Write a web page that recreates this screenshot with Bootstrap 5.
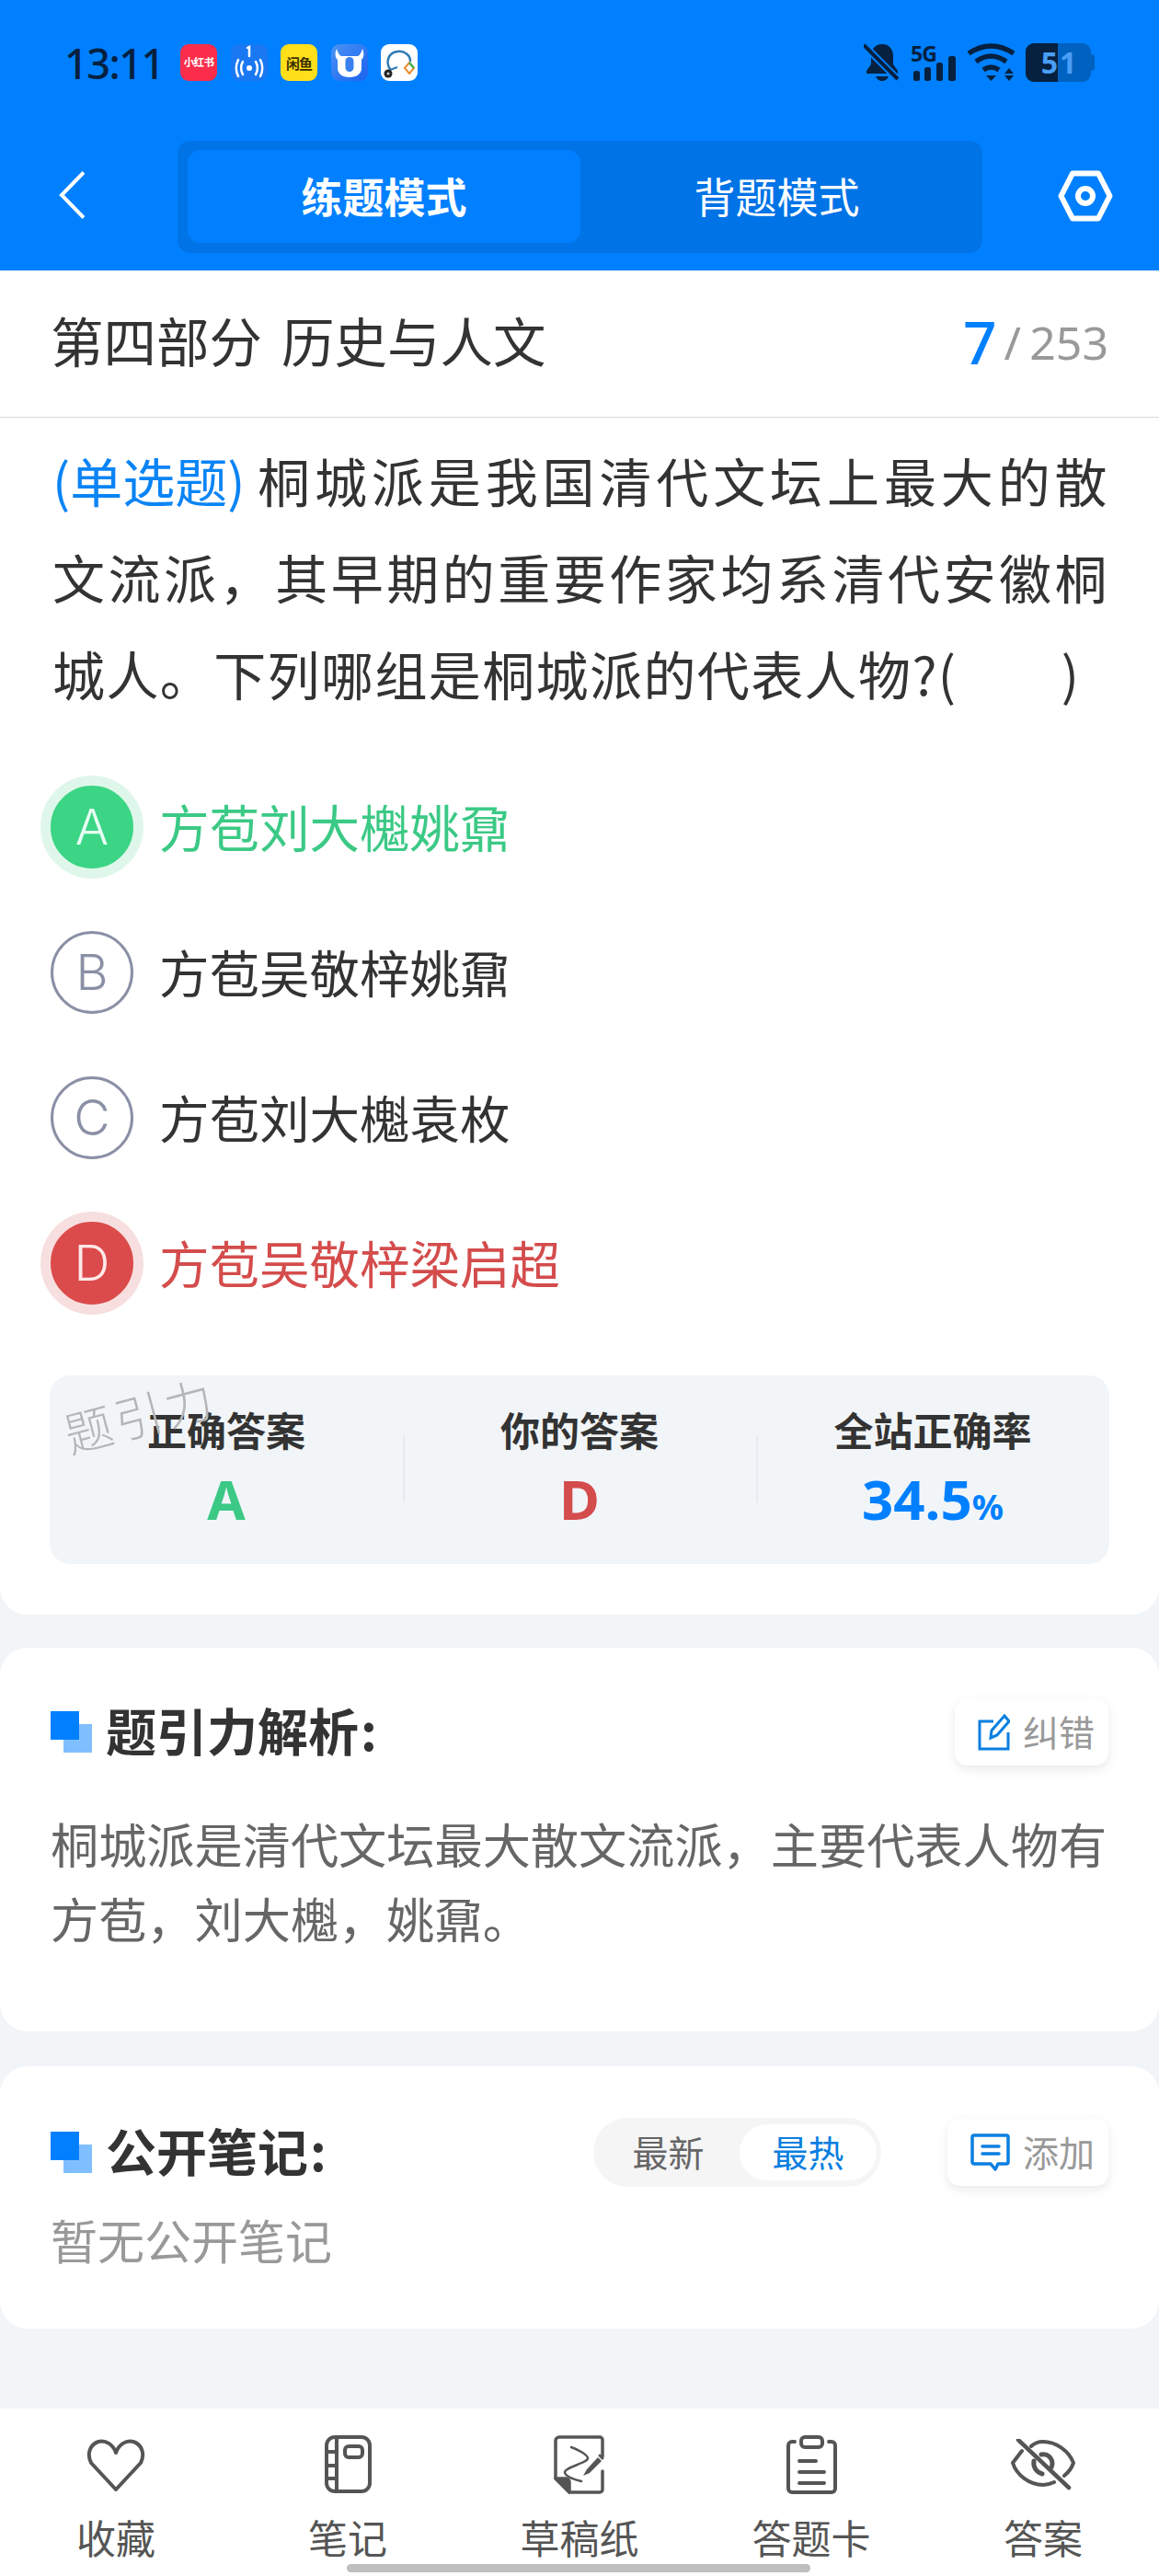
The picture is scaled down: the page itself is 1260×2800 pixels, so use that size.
<!DOCTYPE html>
<html lang="zh-CN">
<head>
<meta charset="utf-8">
<title>练题模式</title>
<link href="https://cdn.jsdelivr.net/npm/bootstrap@5.3.0/dist/css/bootstrap.min.css" rel="stylesheet">
<style>
html,body{margin:0;padding:0}
body{width:1260px;height:2800px;overflow:hidden;background:#f1f5f8;color:#333;font-family:"Noto Sans CJK SC","Noto Sans",sans-serif}
.shell{height:2800px}
.hdr{background:#0080ff;height:294px}
.statusrow{height:136px;padding-left:70px;padding-right:70px}
.clock{font-family:"Noto Sans","Noto Sans CJK SC",sans-serif;font-size:45px;font-weight:500;color:#06203f;line-height:1;width:102px;margin-right:24px;letter-spacing:-1.500px;white-space:nowrap}
.appicons{gap:14.5px}
.appico{width:40px;height:40px;border-radius:9px;font-weight:700;line-height:1;overflow:hidden;white-space:nowrap}
.appred{background:#fb2d4b;color:#fff;font-size:11.5px;letter-spacing:-.6px}
.appyellow{background:#ffde1a;color:#3b2f00;font-size:15px;letter-spacing:-1px}
.appblue{background:#1a78f2}
.appgrad{background:linear-gradient(135deg,#4a93f5,#1a62ee)}
.appwhite{background:#fff}
.sysicons{gap:11px}
.fiveg{font-size:23px;font-weight:700;color:#06203f;line-height:1;font-family:"Noto Sans",sans-serif;letter-spacing:-1px}
.sigwrap{width:50px;height:43px}
.batt{width:71px;height:42px;border-radius:9px;background:#0062c0;font-family:"Noto Sans",sans-serif;font-weight:700;font-size:32px;line-height:42px;color:#4a9ef5}
.battfill{width:35px;height:42px;background:#06203f;text-align:right;border-radius:9px 0 0 9px}
.battrest{padding-left:2px}
.batttip{width:4px;height:18px;background:#0062c0;border-radius:0 3px 3px 0}
.navrow{height:158px;padding-left:64px}
.chev{margin-top:-6px}
.hexi{margin-top:-4px}
.tabbar{width:875px;height:122px;margin-left:101px;margin-right:82px;background:#0073e6;border-radius:14px;padding:10px 10px 11px 11px;margin-top:-2px}
.tabitem{flex:1 1 0;border-radius:14px;color:#fff;font-size:45px;line-height:1;padding-bottom:3px}
.tabon{background:#0080ff;font-weight:700}
.sheet{background:#fff;border-radius:0 0 30px 30px;height:1461px}
.titlebar{height:160px;border-bottom:1px solid #d9d9d9;padding:0 55px 0 55px}
.secname{font-size:57.5px;color:#333;line-height:1;word-spacing:8px;padding-bottom:8px}
.counter{font-family:"Noto Sans",sans-serif;color:#999;font-size:50px;line-height:1;padding-bottom:4px}
.counter b{font-weight:500;color:#0080ff;font-size:64px}
.slashmark{margin:0 9px 0 8px}
.qtext{margin:15px 55px 0 57px;font-size:57px;letter-spacing:1.4px;line-height:105px;text-align:justify;color:#333}
.qtype{color:#0a84f5;letter-spacing:0;display:inline-block;margin-right:10px}
.opts{margin-top:36px;padding-left:55px}
.optrow{height:158px}
.optdot{width:90px;height:90px;border:3px solid #8a90a5;color:#8a90a5;font-family:Inter,sans-serif;font-weight:300;font-size:54px;line-height:1;margin-right:28px}
.optok{background:#3bd585;border-color:#3bd585;color:#e6fff2;box-shadow:0 0 0 11px #dff7ea}
.optbad{background:#dc4b4b;border-color:#dc4b4b;color:#ffe9e9;box-shadow:0 0 0 11px #f8dfdf}
.opttext{font-size:54.5px;line-height:1;color:#333;padding-bottom:2px}
.optgreen{color:#3bc985}
.optred{color:#d44c4c}
.statbox{margin:43px 54px 0;height:205px;background:#f1f5f8;border-radius:22px;padding-top:34px}
.statcol{flex:1 1 0}
.statcol+.statcol::before{content:"";position:absolute;left:0;top:31px;height:73px;width:2px;background:#e7ebef}
.statlabel{font-size:43px;font-weight:700;line-height:48px;color:#333}
.statval{font-family:"Noto Sans",sans-serif;font-size:60px;font-weight:700;line-height:56px;margin-top:24px}
.statval small{font-size:38px;font-weight:700}
.valblue{color:#0080ff}
.wm{left:14px;top:16px;font-size:52px;letter-spacing:4px;color:#b5b5b5;transform:rotate(-15deg);line-height:1;font-weight:300}
.panel{background:#fff;border:0;border-radius:30px}
.panelA{margin-top:36px;height:417px;padding:55px 55px 0}
.panelB{margin-top:38px;height:285px;padding:56px 55px 0}
.mark{width:31px;height:31px;background:#0080ff;box-shadow:14px 14px 0 #80bfff;margin:0 29px 14px 0}
.phead{font-size:55px;font-weight:700;line-height:1;color:#333;padding-bottom:7px}
.colonmark{margin-left:2px}
.tool{height:73px;border-radius:14px;background:#fff;box-shadow:0 4px 12px rgba(0,0,0,.09);padding:0 15px 0 25px;font-size:39px;color:#999;line-height:1;gap:14px;border:0}
.tool span{padding-bottom:2px}
.anatext{margin-top:44px;font-size:52.2px;line-height:81px;color:#666}
.seg{width:313px;height:75px;border-radius:38px;background:#f5f5f5;padding:7px 5px 7px 0;font-size:39px;line-height:1;color:#666;margin-right:72px}
.segoff{width:159px;padding-left:4px;padding-bottom:2px}
.segon{width:149px;height:61px;border-radius:31px;background:#fff;color:#0a7fe0;padding-bottom:2px}
.empty{margin-top:22px;font-size:51px;line-height:70px;color:#999}
.tabbarb{height:182px;background:#fff}
.bcol{flex:1 1 0;padding-top:29px}
.bico{height:63px}
.blabel{margin-top:22px;font-size:43px;line-height:50px;color:#555}
.homebar{left:377px;top:2787px;width:504px;height:9px;border-radius:5px;background:#bfbfbf}
svg{display:block}
</style>
</head>
<body>
<div class="shell d-flex flex-column position-relative">
  <header class="hdr">
    <div class="statusrow d-flex align-items-center">
      <div class="clock">13:11</div>
      <div class="appicons d-flex">
        <div class="appico appred d-flex align-items-center justify-content-center">小红书</div>
        <div class="appico appblue">
          <svg width="40" height="40" viewBox="0 0 40 40" fill="none" stroke="#fff" stroke-width="2" stroke-linecap="round"><path d="M18 4l2-1v10" stroke-width="2.500"/><circle cx="20" cy="26" r="3" fill="#fff" stroke="none"/><path d="M13 19c-2.500 4-2.500 10 0 14M27 19c2.500 4 2.500 10 0 14M8 17c-3 6-3 12 0 18M32 17c3 6 3 12 0 18" stroke-width="2.500"/></svg>
        </div>
        <div class="appico appyellow d-flex align-items-center justify-content-center">闲鱼</div>
        <div class="appico appgrad">
          <svg width="40" height="40" viewBox="0 0 40 40"><path d="M6 5c1 4 3 7 5 8h18c2-1 4-4 5-8 2 4 2 9-1 12v9c0 6-5 10-13 10S7 32 7 26v-9C4 14 4 9 6 5z" fill="#fff"/><rect x="15.500" y="14" width="9" height="16" rx="4.500" fill="#3a80f0"/></svg>
        </div>
        <div class="appico appwhite">
          <svg width="40" height="40" viewBox="0 0 40 40" fill="none"><path d="M10 27C5 20 8 9 18 8c8-1 14 4 14 10" stroke="#2e7bb5" stroke-width="2.500" stroke-linecap="round"/><path d="M10 28l8-3" stroke="#2e7bb5" stroke-width="2"/><circle cx="8" cy="32" r="4.500" fill="#222"/><circle cx="8" cy="32" r="1.500" fill="#ccc"/><path d="M31 20l5 6-5 6-5-6z" stroke="#f08a2c" stroke-width="2"/><path d="M31 20l5 6" stroke="#43b35a" stroke-width="2.500"/></svg>
        </div>
      </div>
      <div class="sysicons d-flex align-items-center ms-auto">
        <svg width="40" height="44" viewBox="0 0 40 44" fill="#06203f"><path d="M20 2c-8 0-12 6-12 13v9l-5 7v3h34v-3l-5-7v-9c0-7-4-13-12-13z"/><path d="M13 37h14c-1 3-4 5-7 5s-6-2-7-5z"/><path d="M2 5l34 34" stroke="#0080ff" stroke-width="8"/><path d="M0 3l37 37" stroke="#06203f" stroke-width="4"/></svg>
        <div class="sigwrap position-relative">
          <span class="fiveg position-absolute top-0 start-0">5G</span>
          <svg width="50" height="43" viewBox="0 0 50 43" fill="#06203f"><rect x="3" y="30" width="7" height="11" rx="2.500"/><rect x="15" y="26" width="7" height="15" rx="2.500"/><rect x="28" y="21" width="7" height="20" rx="2.500"/><rect x="41" y="14" width="8" height="27" rx="2.500"/></svg>
        </div>
        <svg width="53" height="43" viewBox="0 0 53 43" fill="none" stroke="#06203f" stroke-width="5.500"><path d="M2 11Q26.500 -5 51 11"/><path d="M10 20Q26 8 43 20"/><path d="M18 29Q26.500 23 35 29"/><path d="M21 35h11l-5.500 6z" fill="#06203f" stroke="none"/><path d="M41 33h10l-5-6zM41 35h10l-5 6z" fill="#06203f" stroke="none"/></svg>
        <div class="d-flex align-items-center">
          <div class="batt d-flex">
            <div class="battfill">5</div>
            <div class="battrest">1</div>
          </div>
          <div class="batttip"></div>
        </div>
      </div>
    </div>
    <div class="navrow d-flex align-items-center">
      <svg class="chev" width="28" height="52" viewBox="0 0 28 52" fill="none" stroke="#fff" stroke-width="4"><path d="M27 1.500L3 26l24 24.500"/></svg>
      <div class="tabbar d-flex">
        <div class="tabitem tabon d-flex align-items-center justify-content-center">练题模式</div>
        <div class="tabitem d-flex align-items-center justify-content-center">背题模式</div>
      </div>
      <svg class="hexi" width="60" height="56" viewBox="0 0 60 56" fill="none" stroke="#fff" stroke-width="6" stroke-linejoin="round"><path d="M16 3.500h28L56.500 28 44 52.500H16L3.500 28z"/><circle cx="30" cy="28" r="8"/></svg>
    </div>
  </header>

  <section class="sheet">
    <div class="titlebar d-flex align-items-center justify-content-between">
      <div class="secname">第四部分 历史与人文</div>
      <div class="counter d-flex align-items-center"><b>7</b><span class="slashmark">/</span><span>253</span></div>
    </div>
    <p class="qtext mb-0"><span class="qtype">(单选题)</span>桐城派是我国清代文坛上最大的散文流派，其早期的重要作家均系清代安徽桐城人。下列哪组是桐城派的代表人物?(&nbsp;&nbsp;&nbsp;&nbsp;&nbsp;&nbsp;&nbsp;&nbsp;)</p>
    <div class="opts">
      <div class="optrow d-flex align-items-center"><div class="optdot optok rounded-circle d-flex align-items-center justify-content-center">A</div><div class="opttext optgreen">方苞刘大櫆姚鼐</div></div>
      <div class="optrow d-flex align-items-center"><div class="optdot rounded-circle d-flex align-items-center justify-content-center">B</div><div class="opttext">方苞吴敬梓姚鼐</div></div>
      <div class="optrow d-flex align-items-center"><div class="optdot rounded-circle d-flex align-items-center justify-content-center">C</div><div class="opttext">方苞刘大櫆袁枚</div></div>
      <div class="optrow d-flex align-items-center"><div class="optdot optbad rounded-circle d-flex align-items-center justify-content-center">D</div><div class="opttext optred">方苞吴敬梓梁启超</div></div>
    </div>
    <div class="statbox d-flex position-relative">
      <div class="statcol text-center position-relative"><div class="statlabel">正确答案</div><div class="statval optgreen">A</div></div>
      <div class="statcol text-center position-relative"><div class="statlabel">你的答案</div><div class="statval optred">D</div></div>
      <div class="statcol text-center position-relative"><div class="statlabel">全站正确率</div><div class="statval valblue">34.5<small>%</small></div></div>
      <div class="wm position-absolute">题引力</div>
    </div>
  </section>

  <section class="panel panelA">
    <div class="d-flex align-items-center justify-content-between">
      <div class="d-flex align-items-center"><span class="mark"></span><span class="phead">题引力解析<span class="colonmark">:</span></span></div>
      <button class="tool btn d-flex align-items-center" type="button">
        <svg width="35" height="40" viewBox="0 0 35 40" fill="none" stroke="#0a7fe0" stroke-width="3"><path d="M17 8H2v30h31V20"/><path d="M29 2l5 6-13 15-7 3 1-8z"/></svg>
        <span>纠错</span>
      </button>
    </div>
    <p class="anatext mb-0">桐城派是清代文坛最大散文流派，主要代表人物有方苞，刘大櫆，姚鼐。</p>
  </section>

  <section class="panel panelB">
    <div class="d-flex align-items-center">
      <span class="mark"></span><span class="phead">公开笔记<span class="colonmark">:</span></span>
      <div class="seg d-flex align-items-center ms-auto">
        <div class="segoff text-center">最新</div>
        <div class="segon d-flex align-items-center justify-content-center">最热</div>
      </div>
      <button class="tool btn d-flex align-items-center" type="button">
        <svg width="43" height="42" viewBox="0 0 43 42" fill="none" stroke="#0a7fe0" stroke-width="3.500" stroke-linejoin="round"><path d="M2 4a2 2 0 0 1 2-2h35a2 2 0 0 1 2 2v27a2 2 0 0 1-2 2H30l-3 6-5-6H4a2 2 0 0 1-2-2z"/><path d="M13 14h18M13 22h18" stroke-linecap="round"/></svg>
        <span>添加</span>
      </button>
    </div>
    <p class="empty mb-0">暂无公开笔记</p>
  </section>

  <footer class="tabbarb d-flex mt-auto">
    <div class="bcol text-center">
      <div class="bico d-flex align-items-center justify-content-center"><svg width="64" height="58" viewBox="0 0 64 58" fill="none" stroke="#555" stroke-width="4" stroke-linejoin="round"><path d="M32 16C29 7 21 2 13 4 4 7 0 17 5 27l27 29 27-29c5-10 1-20-8-23-8-2-16 3-19 12z"/></svg></div>
      <div class="blabel">收藏</div>
    </div>
    <div class="bcol text-center">
      <div class="bico d-flex align-items-center justify-content-center"><svg width="51" height="63" viewBox="0 0 51 63" fill="none" stroke="#555" stroke-width="4"><rect x="2" y="2" width="47" height="59" rx="9"/><path d="M13 2v59M2 18h11M2 33h11M2 47h11"/><rect x="22" y="12" width="19" height="12" rx="4"/></svg></div>
      <div class="blabel">笔记</div>
    </div>
    <div class="bcol text-center">
      <div class="bico d-flex align-items-center justify-content-center"><svg width="56" height="64" viewBox="0 0 56 64" fill="none" stroke="#555" stroke-width="3.500" stroke-linejoin="round" stroke-linecap="round"><path d="M53 23V5a3 3 0 0 0-3-3H6A4 4 0 0 0 2 6v41l15 15h33a3 3 0 0 0 3-3V39"/><path d="M2 47h11a4 4 0 0 1 4 4v11z" fill="#555"/><path d="M19 13c6 2 18 8 18 12 0 5-25 10-25 15 0 5 10 8 18 10" stroke-width="2.500"/><path d="M48 24L36 37l-4 7 7-3 13-13z" fill="#555" stroke="none"/><path d="M50 22l3 3" stroke-width="3"/></svg></div>
      <div class="blabel">草稿纸</div>
    </div>
    <div class="bcol text-center">
      <div class="bico d-flex align-items-center justify-content-center"><svg width="55" height="64" viewBox="0 0 55 64" fill="none" stroke="#555" stroke-width="4" stroke-linecap="round"><path d="M9 7H6a4 4 0 0 0-4 4v47a4 4 0 0 0 4 4h43a4 4 0 0 0 4-4V11a4 4 0 0 0-4-4h-3"/><rect x="16" y="2" width="23" height="11" rx="4"/><path d="M14 28h18M14 40h27M14 52h27"/></svg></div>
      <div class="blabel">答题卡</div>
    </div>
    <div class="bcol text-center">
      <div class="bico d-flex align-items-center justify-content-center"><svg width="70" height="56" viewBox="0 0 70 56" fill="none" stroke="#555" stroke-width="4" stroke-linecap="round" stroke-linejoin="round"><path d="M22 8C26 4 30 3 35 3c14 0 28 10 33 23-2 6-5 10-10 14"/><path d="M12 13L2 26c4 13 18 24 33 24 4 0 8-1 12-3"/><path d="M8 1l55 52" stroke-width="4.500"/><path d="M25 24c-1 6 2 12 9 14" stroke-width="5"/><path d="M33 17c6-1 11 2 12 9 0 2 0 3-1 5" stroke-width="5"/></svg></div>
      <div class="blabel">答案</div>
    </div>
  </footer>
  <div class="homebar position-absolute"></div>
</div>
<script src="https://cdn.jsdelivr.net/npm/bootstrap@5.3.0/dist/js/bootstrap.bundle.min.js"></script>
</body>
</html>
